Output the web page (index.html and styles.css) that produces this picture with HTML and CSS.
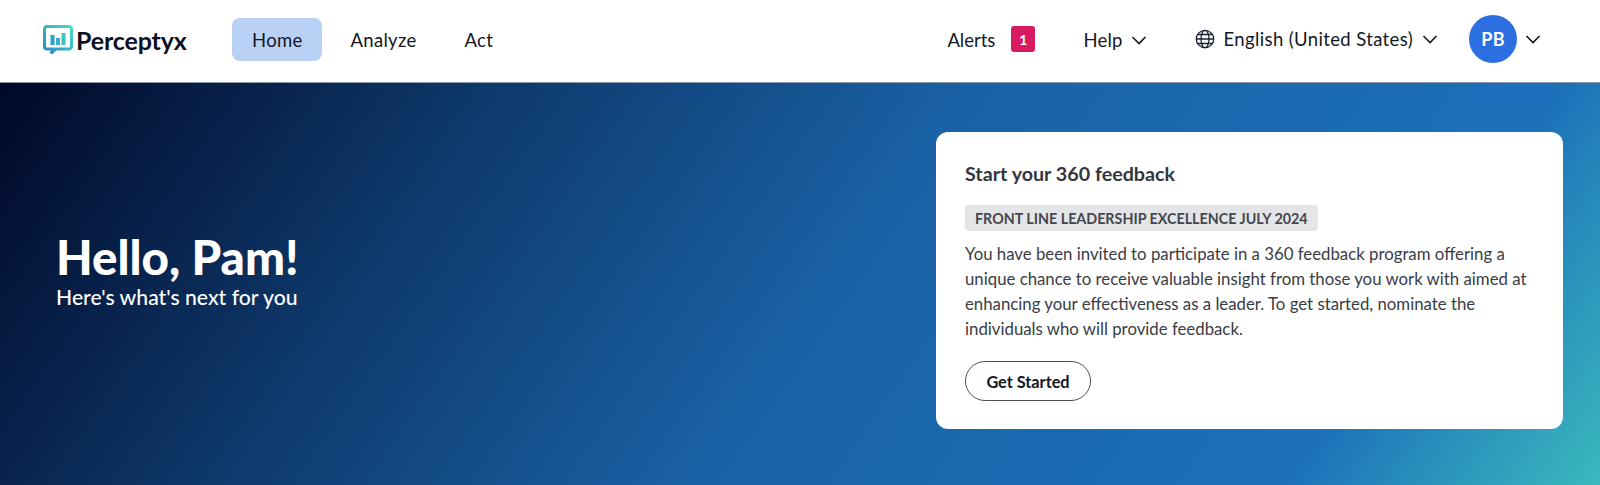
FILE: index.html
```html
<!DOCTYPE html>
<html lang="en">
<head>
<meta charset="utf-8">
<title>Perceptyx</title>
<link rel="stylesheet" href="styles.css">
</head>
<body>
<header class="topbar">
  <div class="brand">
    <svg class="brand-mark" width="30" height="31" viewBox="0 0 30 31" fill="none">
      <defs>
        <linearGradient id="lg" x1="0" y1="1" x2="1" y2="0">
          <stop offset="0" stop-color="#2a86c8"/>
          <stop offset="1" stop-color="#45dcc4"/>
        </linearGradient>
      </defs>
      <path d="M10 24H4a2.5 2.5 0 0 1-2.5-2.5V4A2.5 2.5 0 0 1 4 1.500h22A2.500 2.500 0 0 1 28.500 4v17.500A2.500 2.500 0 0 1 26 24H13l-5 4.500z" stroke="url(#lg)" stroke-width="3"/>
      <rect x="7.500" y="10" width="4" height="10" fill="#2f9fcb"/>
      <rect x="13" y="13" width="4" height="7" fill="#35aecb"/>
      <rect x="18.500" y="8" width="4" height="12" fill="#3cc0c8"/>
    </svg>
    <span class="brand-name">Perceptyx</span>
  </div>
  <nav class="nav">
    <a class="nav-item is-active">Home</a>
    <a class="nav-item">Analyze</a>
    <a class="nav-item">Act</a>
  </nav>
  <div class="utils">
    <div class="util alerts"><span>Alerts</span><span class="badge">1</span></div>
    <div class="util help"><span>Help</span>
      <svg class="chev" width="16" height="9" viewBox="0 0 16 9"><path d="M1.500 1l6.500 6.500L14.500 1" fill="none" stroke="#14171f" stroke-width="1.600"/></svg>
    </div>
    <div class="util lang">
      <svg class="globe" width="20" height="20" viewBox="0 0 20 20" fill="none" stroke="#1c2233" stroke-width="1.300">
        <circle cx="10" cy="10" r="8.700"/>
        <ellipse cx="10" cy="10" rx="4" ry="8.700"/>
        <path d="M1.300 10h17.400M2.600 5.500h14.800M2.600 14.500h14.800"/>
      </svg>
      <span>English (United States)</span>
      <svg class="chev" width="16" height="9" viewBox="0 0 16 9"><path d="M1.500 1l6.500 6.500L14.500 1" fill="none" stroke="#14171f" stroke-width="1.600"/></svg>
    </div>
    <div class="util user">
      <span class="avatar">PB</span>
      <svg class="chev" width="16" height="9" viewBox="0 0 16 9"><path d="M1.500 1l6.500 6.500L14.500 1" fill="none" stroke="#14171f" stroke-width="1.600"/></svg>
    </div>
  </div>
</header>
<main class="hero">
  <div class="greeting">
    <h1>Hello, Pam!</h1>
    <p>Here's what's next for you</p>
  </div>
  <section class="card">
    <h2>Start your 360 feedback</h2>
    <span class="tag">FRONT LINE LEADERSHIP EXCELLENCE JULY 2024</span>
    <p class="body">You have been invited to participate in a 360 feedback program offering a unique chance to receive valuable insight from those you work with aimed at enhancing your effectiveness as a leader. To get started, nominate the individuals who will provide feedback.</p>
    <button class="btn">Get Started</button>
  </section>
</main>
</body>
</html>
```
FILE: styles.css
```css
* { box-sizing: border-box; }
html, body { margin: 0; height: 100%; }
body {
  font-family: "Lato", "Liberation Sans", sans-serif;
  color: #14171f;
  display: flex;
  flex-direction: column;
  overflow: hidden;
}
.topbar {
  height: 83px;
  flex: none;
  display: flex;
  align-items: center;
  padding: 0 59px 4px 43px;
  background: #fff;
  border-bottom: 1px solid #8d99a8;
}
.brand { display: flex; align-items: center; gap: 3px; width: 189px; }
.brand-mark { margin-top: 2px; }
.brand-name { font-size: 25px; font-weight: 700; color: #0c1024; letter-spacing: -0.15px; padding-top: 2px; }
.nav { display: flex; align-items: center; gap: 9px; }
.nav-item {
  height: 43px;
  display: flex;
  align-items: center;
  padding: 2px 19px 0 20px;
  border-radius: 8px;
  font-size: 18.500px;
  letter-spacing: 0.3px;
}
.is-active { background: #b9d1f5; }
.utils { margin-left: auto; display: flex; align-items: center; }
.util { display: flex; align-items: center; font-size: 18.500px; letter-spacing: 0.2px; }
.alerts, .help { padding-top: 2px; }
.alerts span:first-child { letter-spacing: 0; }
.lang span { letter-spacing: 0.37px; }
.badge {
  width: 24px;
  height: 26px;
  margin: -2px 0 0 16px;
  border-radius: 3px;
  background: #d81b60;
  color: #fff;
  font-size: 14px;
  font-weight: 700;
  display: flex;
  align-items: center;
  justify-content: center;
}
.help { margin-left: 48px; gap: 8px; }
.lang { margin-left: 48px; gap: 9px; }
.user { margin-left: 31px; gap: 8px; }
.avatar {
  width: 48px;
  height: 48px;
  border-radius: 50%;
  background: #2b6fe0;
  color: #fff;
  font-weight: 700;
  font-size: 18px;
  display: flex;
  align-items: center;
  justify-content: center;
}
.hero {
  flex: 1;
  display: flex;
  align-items: flex-start;
  justify-content: space-between;
  padding: 49px 37px 0 56px;
  background: linear-gradient(125deg, #010827 0%, #0d3566 24%, #1a62a6 52%, #1c70ba 83%, #3ab9bd 100%);
}
.greeting { margin-top: 100px; color: #fff; }
.greeting h1 { margin: 0; font-size: 47.500px; line-height: 50px; font-weight: 900; }
.greeting p { margin: 3px 0 0; font-size: 21.200px; line-height: 24px; font-weight: 500; }
.card {
  width: 627px;
  height: 297px;
  background: #fff;
  border-radius: 12px;
  padding: 31px 28px 0 29px;
}
.card h2 { margin: 0 0 20px; font-size: 19.700px; line-height: 22px; font-weight: 700; color: #33363f; }
.tag {
  display: inline-block;
  height: 26px;
  line-height: 27px;
  padding: 0 10px;
  background: #e4e5e7;
  border-radius: 4px;
  font-size: 14.300px;
  font-weight: 700;
  color: #45474f;
  white-space: nowrap;
}
.body { margin: 10px 0 20px; font-size: 16.800px; line-height: 25px; color: #3a3c45; }
.btn {
  display: block;
  width: 126px;
  height: 40px;
  border: 1px solid #4a4d55;
  border-radius: 20px;
  background: #fff;
  font: 700 16.300px "Lato", "Liberation Sans", sans-serif;
  color: #14171f;
}
```
